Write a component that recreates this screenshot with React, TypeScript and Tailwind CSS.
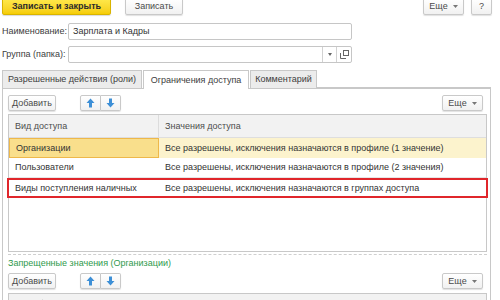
import React from "react";

const btn =
  "flex items-center justify-center rounded-[2px] border border-[#c9c9c9] bg-gradient-to-b from-white to-[#f1f1f1] shadow-[0_1px_1px_rgba(0,0,0,0.12)] text-[#4a4a4a]";

function Arrow({ up }: { up?: boolean }) {
  return (
    <svg width="9" height="10" viewBox="0 0 9 10" className={up ? "" : "rotate-180"}>
      <path d="M4.5 0.5 L8.5 5 L6 5 L6 9.5 L3 9.5 L3 5 L0.5 5 Z" fill="#3d8fd6" />
    </svg>
  );
}

function Caret() {
  return (
    <svg width="5" height="3" viewBox="0 0 5 3" className="ml-[5px]">
      <path d="M0 0 L5 0 L2.5 3 Z" fill="#777" />
    </svg>
  );
}

function Toolbar() {
  return (
    <div className="flex h-[16px] items-center pr-[4px]">
      <div className={`${btn} h-[16px] w-[48px]`}>Добавить</div>
      <div className="ml-[24px] flex h-[16px]">
        <div className={`${btn} h-[16px] w-[21px] rounded-r-none`}>
          <Arrow up />
        </div>
        <div className={`${btn} h-[16px] w-[20px] rounded-l-none border-l-0`}>
          <Arrow />
        </div>
      </div>
      <div className={`${btn} ml-auto h-[16px] w-[41px]`}>
        Еще
        <Caret />
      </div>
    </div>
  );
}

const rows = [
  { kind: "Организации", value: "Все разрешены, исключения назначаются в профиле (1 значение)" },
  { kind: "Пользователи", value: "Все разрешены, исключения назначаются в профиле (2 значения)" },
  { kind: "Виды поступления наличных", value: "Все разрешены, исключения назначаются в группах доступа" },
];

export default function App() {
  return (
    <div
      className="h-[300px] w-[500px] overflow-hidden whitespace-nowrap bg-white text-[9px] leading-none text-[#404040]"
      style={{ fontFamily: '"Liberation Sans", Arial, sans-serif' }}
    >
      {/* command bar */}
      <div className="flex h-[15px] items-start pl-[2px]">
        <div className="mt-[-2px] flex h-[17px] w-[109px] items-center justify-center rounded-[2px] border border-[#d9b400] bg-gradient-to-b from-[#ffe94a] to-[#f6cd00] font-bold text-[#2b2b2b] shadow-[0_1px_1px_rgba(0,0,0,0.15)]">
          Записать и закрыть
        </div>
        <div className={`${btn} mt-[-2px] ml-[14px] h-[17px] w-[58px]`}>Записать</div>
        <div className={`${btn} mt-[-2px] ml-auto h-[17px] w-[41px]`}>
          Еще
          <Caret />
        </div>
        <div className={`${btn} mt-[-2px] ml-[7px] mr-[8px] h-[17px] w-[21px]`}>?</div>
      </div>

      {/* fields */}
      <div className="mt-[8px] flex h-[17px] items-center pl-[2px]">
        <span className="w-[66px]">Наименование:</span>
        <div className="flex h-[17px] w-[284px] items-center rounded-[2px] border border-[#c6c6c6] pl-[4px] text-[#333]">
          Зарплата и Кадры
        </div>
      </div>
      <div className="mt-[6px] flex h-[17px] items-center pl-[2px]">
        <span className="w-[66px]">Группа (папка):</span>
        <div className="flex h-[17px] w-[284px] rounded-[2px] border border-[#c6c6c6]">
          <div className="flex-1" />
          <div className="flex w-[14px] items-center justify-center border-l border-[#d2d2d2]">
            <svg width="4" height="3" viewBox="0 0 4 3">
              <path d="M0 0 L4 0 L2 3 Z" fill="#666" />
            </svg>
          </div>
          <div className="flex w-[15px] items-center justify-center border-l border-[#d2d2d2]">
            <svg width="9" height="9" viewBox="0 0 9 9">
              <rect x="3.5" y="0.5" width="5" height="5" fill="none" stroke="#666" />
              <path d="M0.5 3 V8.5 H6" fill="none" stroke="#666" />
            </svg>
          </div>
        </div>
      </div>

      {/* tabs */}
      <div className="mt-[7px] flex h-[18px] items-end pl-[2px] pr-[9px]">
        <div className="flex h-[18px] w-[140px] items-center justify-center border border-b-0 border-[#c8c8c8] bg-[#ececec]">
          Разрешенные действия (роли)
        </div>
        <div className="relative z-10 mb-[-1px] ml-[1px] flex h-[19px] w-[106px] items-center justify-center border border-b-0 border-[#c8c8c8] bg-white">
          Ограничения доступа
        </div>
        <div className="ml-[1px] flex h-[18px] w-[67px] items-center justify-center border border-b-0 border-[#c8c8c8] bg-[#ececec]">
          Комментарий
        </div>
        <div className="flex-1 border-b border-[#c8c8c8]" />
      </div>

      {/* panel */}
      <div className="ml-[2px] mr-[9px] h-[220px] border border-b-0 border-[#c8c8c8] pl-[5px] pr-[3px] pt-[6px]">
        <Toolbar />

        <div className="mt-[3px] h-[138px] border border-[#c8c8c8]">
          <div className="flex h-[23px] border-b border-[#dedede] bg-[#f2f2f2] text-[#4d4d4d]">
            <div className="flex w-[150px] items-center border-r border-[#dcdcdc] pl-[6px]">Вид доступа</div>
            <div className="flex flex-1 items-center pl-[6px]">Значения доступа</div>
          </div>
          {rows.map((r, i) => (
            <div
              key={r.kind}
              className={`flex h-[20px] text-[#333] ${
                i === 0
                  ? "bg-[#fcf3cd]"
                  : i === 2
                  ? "mx-[-2px] border-2 border-[#e0262b] bg-white"
                  : "border-b border-[#e6e6e6] bg-white"
              }`}
            >
              <div
                className={`flex w-[150px] items-center pl-[6px] ${
                  i === 0 ? "border border-[#eeb84a] bg-[#f9df8c]" : ""
                }`}
              >
                {r.kind}
              </div>
              <div className="flex flex-1 items-center pl-[6px]">{r.value}</div>
            </div>
          ))}
        </div>

        <div className="mt-[2px] border-t border-dashed border-[#cfcfcf]" />
        <div className="mt-[2px] flex h-[13px] items-center text-[#2f9a4d]">Запрещенные значения (Организации)</div>
        <div className="mt-[3px]">
          <Toolbar />
        </div>
        <div className="mt-[4px] flex h-[20px] items-start border border-[#c8c8c8] bg-[#f2f2f2] pt-[5px] text-[#4d4d4d]">
          <div className="w-[34px] self-stretch border-r border-[#dcdcdc] pl-[6px]">Н</div>
          <div className="flex-1 pl-[6px]">Значение</div>
        </div>
      </div>
    </div>
  );
}
